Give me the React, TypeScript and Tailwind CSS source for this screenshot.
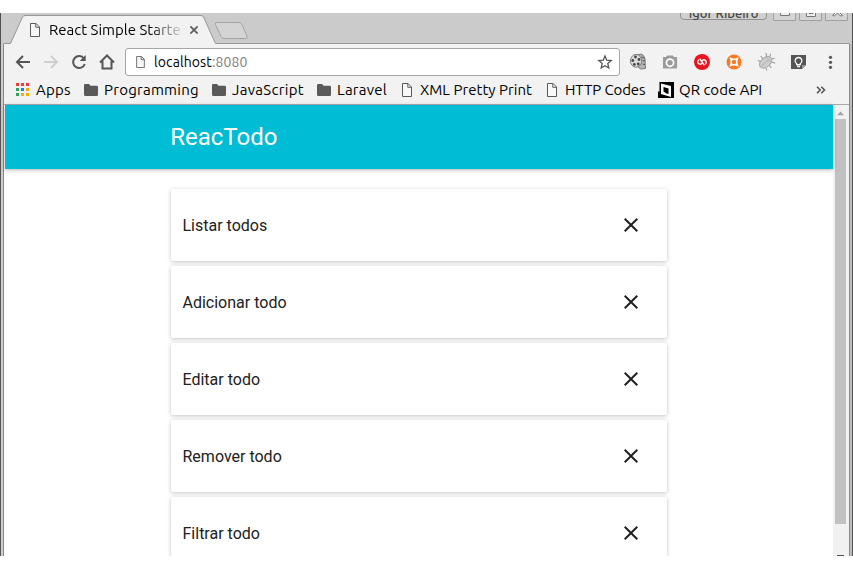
import React from "react";

const uiFont = "font-['Ubuntu','Noto_Sans',sans-serif]";

function FileIcon({ className = "" }: { className?: string }) {
  return (
    <svg viewBox="0 0 10 14" className={className} fill="#f8f8f8" stroke="#5a5a5a" strokeWidth="1">
      <path d="M.5.5H6L9.5 4v9.5H.5z" />
      <path d="M5.8.5v3.8h3.7" fill="none" />
    </svg>
  );
}

function FolderIcon() {
  return (
    <svg viewBox="0 0 14 12" className="h-3 w-3.5 shrink-0" fill="#5a5a5a">
      <path d="M1.2 0H5l1.6 1.7h6.2Q14 1.7 14 3v7.8Q14 12 12.8 12H1.2Q0 12 0 10.8V1.2Q0 0 1.2 0z" />
    </svg>
  );
}

function AppsIcon() {
  const colors = ["#f23a36", "#f23a36", "#f23a36", "#34a060", "#1a80f0", "#fbaa05", "#34a060", "#fbaa05", "#fbaa05"];
  return (
    <div className="grid h-[13px] w-[13px] shrink-0 grid-cols-3 gap-[2px]">
      {colors.map((c, i) => (
        <span key={i} style={{ backgroundColor: c }} />
      ))}
    </div>
  );
}

function QrIcon() {
  return (
    <svg viewBox="0 0 16 16" className="h-4 w-4 shrink-0">
      <path d="M0 0h16v16H0z" />
      <path d="M0 0h1.500v9.500H0z" fill="#eee" />
      <path d="M3 1.500l10 2.500v11l-2.500-.8L3 12z" fill="#fff" />
      <path d="M5.500 5l5 1.500v5.500l-2-.5-3-2z" />
    </svg>
  );
}

interface BookmarkProps {
  icon: React.ReactNode;
  label: string;
  box: string;
  spacing: string;
}

function Bookmark({ icon, label, box, spacing }: BookmarkProps) {
  return (
    <div className={`flex shrink-0 items-center ${box}`}>
      {icon}
      <span className={`whitespace-nowrap ${spacing}`}>{label}</span>
    </div>
  );
}

function TabStrip() {
  return (
    <div className="relative h-[31px] shrink-0 overflow-hidden bg-[#cbcbcb]">
      <svg viewBox="0 0 853 31" className="absolute inset-0 h-[31px] w-[853px]">
        <path d="M3.500 32v-1.500h7L22.500 4q.8-1.500 2.500-1.500h176q1.700 0 2.500 1.500L215.500 30.500H849.500V32" fill="#f2f2f2" stroke="#989898" />
        <path d="M216.500 9.500H239q2 0 2.800 1.800l5.300 12q1 2.200-1.500 2.200H224q-2 0-2.800-1.800l-5.800-12.200q-.8-2 1.100-2z" fill="#d4d4d4" stroke="#a3a3a3" />
        <path d="M0 0h1v31H0zM852 0h1v31h-1z" fill="#505050" />
      </svg>
      <div className="absolute left-[30px] top-[10px] flex h-[14px] items-center">
        <FileIcon className="h-3.5 w-2.5 shrink-0" />
      </div>
      <div className="absolute left-[49px] top-[6px] w-[133px] overflow-hidden whitespace-nowrap text-[15px] leading-[22px] text-black [mask-image:linear-gradient(to_right,black_100px,transparent_137px)]">
        React Simple Starter
      </div>
      <svg viewBox="0 0 8 8" className="absolute left-[190px] top-[13px] h-2 w-2" stroke="#5a5a5a" strokeWidth="1.700">
        <path d="M.4.4l7.200 7.200M7.600.4L.4 7.600" />
      </svg>
      <div className="absolute -top-[11px] left-[680px] flex h-[18px] w-[87px] items-center justify-center rounded-[4px] border border-[#929292] bg-[#d0d0d0] pt-[4px] text-[13px] font-medium leading-none text-[#444]">
        Igor Ribeiro
      </div>
      <svg viewBox="0 0 80 10" className="absolute left-[773px] top-0 h-[10px] w-20" fill="#d4d4d4" stroke="#a0a0a0">
        <path d="M.5-2v9.500h22V-2M26.500-2v9.500h22V-2M52.500-2v9.500h22V-2" />
        <path d="M7.500-2v4.500h9V-2M33.500-2v5.500h9V-2M36-2v2.500h4V-2M59.500 2.500l4-4h2l4 4-2 .5-3-3-3 3z" fill="#eee" stroke="#777" />
      </svg>
    </div>
  );
}

function Toolbar() {
  return (
    <div className="flex h-[33px] shrink-0 items-center bg-[#f2f2f2] pl-[10px] pt-[3px]">
      <svg viewBox="0 0 108 30" className="h-[30px] w-[108px] shrink-0" fill="none" stroke="#555" strokeWidth="2">
        <path d="M16 15H3.500M9 9l-6 6 6 6" />
        <path d="M30 15h12.500M37 9l6 6-6 6" stroke="#cfcfcf" />
        <path d="M70 11.500a6 6 0 1 0 .8 5.500" />
        <path d="M71.700 8v6h-6z" fill="#555" stroke="none" />
        <path d="M86 15.500l7-7 7 7M88.500 14v7.500h9V14" />
      </svg>
      <div className="ml-[3px] flex h-7 w-[495px] shrink-0 items-center rounded-[3px] border border-[#a6a6a6] bg-white pl-[10px] pr-[6px]">
        <FileIcon className="h-3 w-[9px] shrink-0" />
        <span className="ml-[9px] whitespace-nowrap text-[14px] leading-5 tracking-[0.1px] text-black">
          localhost<span className="text-[#808080]">:8080</span>
        </span>
        <svg viewBox="0 0 16 16" className="ml-auto h-4 w-4" fill="none" stroke="#555" strokeWidth="1.300">
          <path d="M8 2l1.700 4.200 4.500.4-3.400 3 1 4.400L8 11.700 4.200 14l1-4.400-3.400-3 4.500-.4z" />
        </svg>
      </div>
      <svg viewBox="0 0 213 20" className="ml-[8px] h-5 w-[213px] shrink-0">
        <g>
          <path d="M9 3l4-1q3 .5 4 5l.5 9.500-5 .5L9 14z" fill="#b5b5b5" stroke="#666" strokeWidth=".8" />
          <path d="M13.500 5l3 1M14.500 8.500l2.500.5M14.500 12l2.500.5" stroke="#555" />
          <ellipse cx="8" cy="8.800" rx="5.600" ry="6.400" fill="#ddd" stroke="#666" strokeWidth=".8" />
          <g fill="#444">
            <circle cx="7.500" cy="5" r="1.400" />
            <circle cx="11" cy="7.500" r="1.400" />
            <circle cx="10.200" cy="12" r="1.400" />
            <circle cx="6.300" cy="12.400" r="1.400" />
            <circle cx="4.800" cy="8.500" r="1.400" />
          </g>
        </g>
        <path d="M35 5h3l1.300-1.500h5.500L46.100 5h3v11.500H35z" fill="#9b9b9b" />
        <circle cx="42" cy="10.700" r="3.600" fill="none" stroke="#fff" strokeWidth="1.700" />
        <circle cx="74" cy="10" r="8" fill="#e8141e" />
        <g transform="rotate(12 74 10)" fill="none" stroke="#fff" strokeWidth="1.400" strokeLinecap="round">
          <path d="M71.500 7.600l3.200 2.900q-1.200 2.700-3.200 2-2.500-1.200-1.300-3.600" />
          <path d="M76.500 12.400l-3.200-2.900q1.200-2.700 3.200-2 2.500 1.200 1.300 3.600" />
        </g>
        <circle cx="106" cy="10" r="7.500" fill="#fa7925" />
        <path d="M101.300 5.300l3.700 1.200h2l3.700-1.200-1.200 3.700v2l1.200 3.700-3.700-1.200h-2l-3.700 1.200 1.200-3.700V9z" fill="#fff" />
        <circle cx="106" cy="10" r="2.200" fill="#fa7925" />
        <g transform="rotate(-42 138 10)">
          <path d="M134 6l-1-3M138 6V2M142 7l2-4M134 14l-1 3M138 14v4M142 13l2 4M144 8.500l3-1.500M144 11.500l3 1.500" fill="none" stroke="#999" />
          <ellipse cx="137.500" cy="10" rx="7" ry="4.600" fill="#cecece" stroke="#a8a8a8" />
          <path d="M131 10h10M141.500 6.500v7" stroke="#aaa" strokeWidth=".8" />
        </g>
        <path d="M163 3h15v10l-4 4h-11z" fill="#555" />
        <path d="M174 17v-4h4z" fill="#999" />
        <path d="M168.700 11.700q-2-1.500-1.500-3.700 .8-2.500 3.300-2.500t3.300 2.500q.5 2.200-1.500 3.700v1h-3.600zM169 14.500h3" fill="none" stroke="#fff" strokeWidth="1.300" />
        <g fill="#555">
          <circle cx="202.500" cy="5.300" r="1.600" />
          <circle cx="202.500" cy="10.300" r="1.600" />
          <circle cx="202.500" cy="15.300" r="1.600" />
        </g>
      </svg>
    </div>
  );
}

function BookmarksBar() {
  const file = <FileIcon className="h-3.5 w-2.5 shrink-0" />;
  return (
    <div className="flex h-7 shrink-0 items-center border-b border-[#aaa] bg-[#f2f2f2] pb-[2px] pl-3 text-[15px] leading-5 text-black">
      <Bookmark icon={<AppsIcon />} label="Apps" box="w-[68px] gap-[7px]" spacing="tracking-[0.2px]" />
      <Bookmark icon={<FolderIcon />} label="Programming" box="w-[128px] gap-[6px]" spacing="tracking-[0.25px]" />
      <Bookmark icon={<FolderIcon />} label="JavaScript" box="w-[105px] gap-[6px]" spacing="tracking-[0.3px]" />
      <Bookmark icon={<FolderIcon />} label="Laravel" box="w-[85px] gap-[6px]" spacing="tracking-[0.25px]" />
      <Bookmark icon={file} label="XML Pretty Print" box="w-[145px] gap-2" spacing="tracking-[0.03px]" />
      <Bookmark icon={file} label="HTTP Codes" box="w-[111px] gap-2" spacing="tracking-[-0.1px]" />
      <Bookmark icon={<QrIcon />} label="QR code API" box="w-[158px] gap-[5px]" spacing="tracking-[0px]" />
      <svg viewBox="0 0 10 8" className="h-2 w-2.5" fill="none" stroke="#555" strokeWidth="1.600">
        <path d="M1 .7L4.200 4 1 7.300M5.300.7L8.500 4 5.300 7.300" />
      </svg>
    </div>
  );
}

const todos = ["Listar todos", "Adicionar todo", "Editar todo", "Remover todo", "Filtrar todo"];

function TodoCard({ text }: { text: string }) {
  return (
    <li className="flex h-[72px] shrink-0 items-center justify-between rounded-[2px] bg-white pl-[11.5px] pr-6 shadow-[0_1px_4px_rgba(0,0,0,0.24)]">
      <span className="pt-[2px] text-[16px] leading-6 text-[#212121]">{text}</span>
      <svg viewBox="0 0 24 24" className="h-6 w-6" fill="#212121">
        <path d="M19 6.410L17.590 5 12 10.590 6.410 5 5 6.410 10.590 12 5 17.590 6.410 19 12 13.410 17.590 19 19 17.590 13.410 12z" />
      </svg>
    </li>
  );
}

function Scrollbar() {
  return (
    <div className="flex w-4 shrink-0 flex-col items-start bg-[#f1f1f1]">
      <svg viewBox="0 0 15 14" className="h-3.5 w-[15px] shrink-0" fill="#a3a3a3">
        <path d="M4 10.200L7.500 6.500l3.500 3.700z" />
      </svg>
      <div className="ml-[2px] h-[405px] w-[11px] shrink-0 bg-[#c1c1c1]" />
      <div className="ml-1 mt-auto h-px w-[7px] bg-[#505050]" />
    </div>
  );
}

export default function App() {
  return (
    <div className="h-[569px] w-[853px] overflow-hidden bg-white py-[13px]">
      <div className={`flex h-[543px] flex-col overflow-hidden ${uiFont}`}>
        <TabStrip />
        <div className="flex h-[512px]">
          <div className="w-px bg-[#555]" />
          <div className="w-[2px] bg-[#d0cdcb]" />
          <div className="w-px bg-[#888]" />
          <div className="flex w-[845px] flex-col">
            <Toolbar />
            <BookmarksBar />
            <div className="flex min-h-0 flex-1 pl-px">
              <main className="flex min-w-0 flex-1 flex-col font-[Roboto,sans-serif]">
                <header className="relative flex h-16 shrink-0 items-center bg-[#00bcd4] pl-[165.2px] shadow-[0_1px_4px_rgba(0,0,0,0.3)]">
                  <h1 className="text-[24px] leading-none text-white">ReacTodo</h1>
                </header>
                <ul className="ml-[166px] mt-5 flex w-[496px] flex-col gap-[5px]">
                  {todos.map((todo) => (
                    <TodoCard key={todo} text={todo} />
                  ))}
                </ul>
              </main>
              <Scrollbar />
            </div>
          </div>
          <div className="w-px bg-[#8a8a8a]" />
          <div className="w-[2px] bg-[#bdbdbd]" />
          <div className="w-px bg-[#505050]" />
        </div>
      </div>
    </div>
  );
}
